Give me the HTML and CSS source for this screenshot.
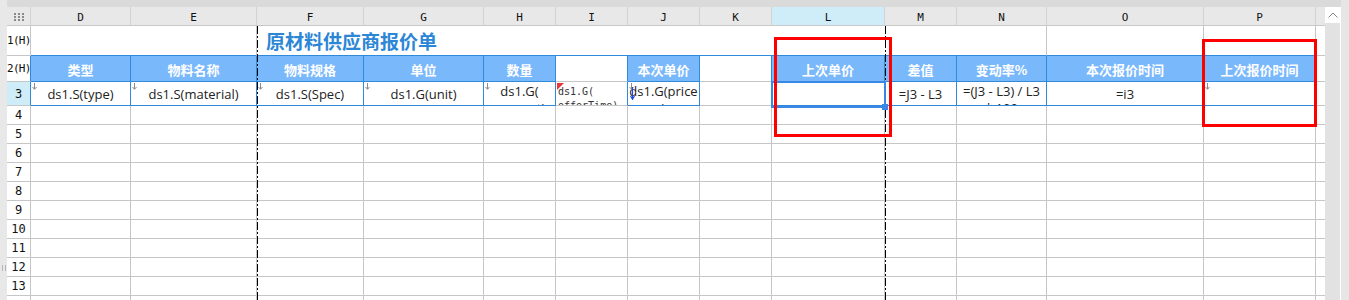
FILE: index.html
```html
<!DOCTYPE html>
<html lang="zh-CN">
<head>
    <meta charset="UTF-8">
    <meta name="viewport" content="width=device-width, initial-scale=1.0">
    <title>原材料供应商报价单 - 设计器</title>
    <link rel="stylesheet" href="styles.css">
</head>
<body>

    <div class="side"><span class="grip"></span></div>

    <div class="main">
        <div class="topbar"></div>
        <div class="work">
            <div class="sheet">
                <!-- 列头 -->
                <div class="corner">
                    <svg width="10" height="8" viewBox="0 0 10 8"><g fill="#8a8a8a"><rect x="0" y="0" width="2" height="2"/><rect x="4" y="0" width="2" height="2"/><rect x="8" y="0" width="2" height="2"/><rect x="0" y="3" width="2" height="2"/><rect x="4" y="3" width="2" height="2"/><rect x="8" y="3" width="2" height="2"/><rect x="0" y="6" width="2" height="2"/><rect x="4" y="6" width="2" height="2"/><rect x="8" y="6" width="2" height="2"/></g></svg>
                </div>
                <div class="ch">D</div><div class="ch">E</div><div class="ch">F</div><div class="ch">G</div><div class="ch">H</div><div class="ch">I</div><div class="ch">J</div><div class="ch">K</div><div class="ch sel">L</div><div class="ch">M</div><div class="ch">N</div><div class="ch">O</div><div class="ch">P</div><div class="ch f"></div>

                <!-- 第1行 标题 -->
                <div class="rh hh">1(H)</div>
                <div class="c top span2"></div>
                <div class="c top span9 title">原材料供应商报价单</div>
                <div class="c top"></div>
                <div class="c top"></div>
                <div class="c f"></div>

                <!-- 第2行 表头 -->
                <div class="rh hh blue">2(H)</div>
                <div class="c h">类型</div>
                <div class="c h">物料名称</div>
                <div class="c h">物料规格</div>
                <div class="c h">单位</div>
                <div class="c h">数量</div>
                <div class="c rb"></div>
                <div class="c h">本次单价</div>
                <div class="c rb"></div>
                <div class="c h">上次单价</div>
                <div class="c h">差值</div>
                <div class="c h">变动率%</div>
                <div class="c h">本次报价时间</div>
                <div class="c h">上次报价时间</div>
                <div class="c f"></div>

                <!-- 第3行 数据 -->
                <div class="rh blue cur">3</div>
                <div class="c b"><span class="mk"><svg width="5" height="7" viewBox="0 0 5 7"><path d="M2.5 0V6M0.5 4L2.5 6.3L4.5 4" fill="none" stroke="#8c8c8c"/></svg></span>ds1.S(type)</div>
                <div class="c b"><span class="mk"><svg width="5" height="7" viewBox="0 0 5 7"><path d="M2.5 0V6M0.5 4L2.5 6.3L4.5 4" fill="none" stroke="#8c8c8c"/></svg></span>ds1.S(material)</div>
                <div class="c b"><span class="mk"><svg width="5" height="7" viewBox="0 0 5 7"><path d="M2.5 0V6M0.5 4L2.5 6.3L4.5 4" fill="none" stroke="#8c8c8c"/></svg></span>ds1.S(Spec)</div>
                <div class="c b"><span class="mk"><svg width="5" height="7" viewBox="0 0 5 7"><path d="M2.5 0V6M0.5 4L2.5 6.3L4.5 4" fill="none" stroke="#8c8c8c"/></svg></span>ds1.G(unit)</div>
                <div class="c b wrap"><span class="mk"><svg width="5" height="7" viewBox="0 0 5 7"><path d="M2.5 0V6M0.5 4L2.5 6.3L4.5 4" fill="none" stroke="#8c8c8c"/></svg></span>ds1.G(<br>amount)</div>
                <div class="c rb mono"><span class="mk"><svg width="8" height="8" viewBox="0 0 8 8"><path d="M0 0H7L0 7Z" fill="#e8343c"/></svg></span>ds1.G(<br>offerTime)</div>
                <div class="c b wrap"><span class="mk"><svg width="5" height="7" viewBox="0 0 5 7"><path d="M2.5 0V6M0.5 4L2.5 6.3L4.5 4" fill="none" stroke="#8c8c8c"/></svg></span><span class="mk down"><svg width="5" height="13" viewBox="0 0 5 13"><path d="M2.5 0V12M0.5 9L2.5 12.3L4.5 9" fill="none" stroke="#1d48e0" stroke-width="1.2"/></svg></span>ds1.G(price<br>)</div>
                <div class="c rb"></div>
                <div class="c b"></div>
                <div class="c b">=J3 - L3</div>
                <div class="c b wrap">=(J3 - L3) / L3<br>* 100</div>
                <div class="c b">=i3</div>
                <div class="c b"><span class="mk"><svg width="5" height="7" viewBox="0 0 5 7"><path d="M2.5 0V6M0.5 4L2.5 6.3L4.5 4" fill="none" stroke="#8c8c8c"/></svg></span></div>
                <div class="c f"></div>

                <!-- 空行 -->
                <div class="rh">4</div><div class="c"></div><div class="c"></div><div class="c"></div><div class="c"></div><div class="c"></div><div class="c"></div><div class="c"></div><div class="c"></div><div class="c"></div><div class="c"></div><div class="c"></div><div class="c"></div><div class="c"></div><div class="c f"></div>
                <div class="rh">5</div><div class="c"></div><div class="c"></div><div class="c"></div><div class="c"></div><div class="c"></div><div class="c"></div><div class="c"></div><div class="c"></div><div class="c"></div><div class="c"></div><div class="c"></div><div class="c"></div><div class="c"></div><div class="c f"></div>
                <div class="rh">6</div><div class="c"></div><div class="c"></div><div class="c"></div><div class="c"></div><div class="c"></div><div class="c"></div><div class="c"></div><div class="c"></div><div class="c"></div><div class="c"></div><div class="c"></div><div class="c"></div><div class="c"></div><div class="c f"></div>
                <div class="rh">7</div><div class="c"></div><div class="c"></div><div class="c"></div><div class="c"></div><div class="c"></div><div class="c"></div><div class="c"></div><div class="c"></div><div class="c"></div><div class="c"></div><div class="c"></div><div class="c"></div><div class="c"></div><div class="c f"></div>
                <div class="rh">8</div><div class="c"></div><div class="c"></div><div class="c"></div><div class="c"></div><div class="c"></div><div class="c"></div><div class="c"></div><div class="c"></div><div class="c"></div><div class="c"></div><div class="c"></div><div class="c"></div><div class="c"></div><div class="c f"></div>
                <div class="rh">9</div><div class="c"></div><div class="c"></div><div class="c"></div><div class="c"></div><div class="c"></div><div class="c"></div><div class="c"></div><div class="c"></div><div class="c"></div><div class="c"></div><div class="c"></div><div class="c"></div><div class="c"></div><div class="c f"></div>
                <div class="rh">10</div><div class="c"></div><div class="c"></div><div class="c"></div><div class="c"></div><div class="c"></div><div class="c"></div><div class="c"></div><div class="c"></div><div class="c"></div><div class="c"></div><div class="c"></div><div class="c"></div><div class="c"></div><div class="c f"></div>
                <div class="rh">11</div><div class="c"></div><div class="c"></div><div class="c"></div><div class="c"></div><div class="c"></div><div class="c"></div><div class="c"></div><div class="c"></div><div class="c"></div><div class="c"></div><div class="c"></div><div class="c"></div><div class="c"></div><div class="c f"></div>
                <div class="rh">12</div><div class="c"></div><div class="c"></div><div class="c"></div><div class="c"></div><div class="c"></div><div class="c"></div><div class="c"></div><div class="c"></div><div class="c"></div><div class="c"></div><div class="c"></div><div class="c"></div><div class="c"></div><div class="c f"></div>
                <div class="rh">13</div><div class="c"></div><div class="c"></div><div class="c"></div><div class="c"></div><div class="c"></div><div class="c"></div><div class="c"></div><div class="c"></div><div class="c"></div><div class="c"></div><div class="c"></div><div class="c"></div><div class="c"></div><div class="c f"></div>
                <div class="rh">14</div><div class="c"></div><div class="c"></div><div class="c"></div><div class="c"></div><div class="c"></div><div class="c"></div><div class="c"></div><div class="c"></div><div class="c"></div><div class="c"></div><div class="c"></div><div class="c"></div><div class="c"></div><div class="c f"></div>

                <!-- 分页线、选中框、标注框 -->
                <div class="pagebreak pb1"></div>
                <div class="pagebreak pb2"></div>
                <div class="selection"><span class="handle"></span></div>
                <div class="mark mark1"></div>
                <div class="mark mark2"></div>
            </div>

            <div class="vscroll">
                <div class="up"><svg width="10" height="6" viewBox="0 0 10 6"><path d="M0.5 5.5L5 1L9.5 5.5" fill="none" stroke="#8a8a8a"/></svg></div>
            </div>
        </div>
    </div>

    <div class="edge"></div>

</body>
</html>
```

FILE: styles.css
```css
* {
    margin: 0;
    padding: 0;
    box-sizing: border-box;
}

body {
    display: flex;
    height: 300px;
    overflow: hidden;
    background: #e8e8e8;
    font-family: "Open Sans", "Noto Sans CJK SC", sans-serif;
}

.side {
    width: 7px;
    display: flex;
    flex-direction: column;
    align-items: center;
}

.grip {
    width: 4px;
    height: 6px;
    margin-top: 265px;
    border-left: 1px solid #b5b5b5;
    border-right: 1px solid #b5b5b5;
}

.main {
    width: 1334px;
    display: flex;
    flex-direction: column;
}

.topbar {
    height: 7px;
    background: #dadada;
}

.work {
    display: flex;
    flex: 1;
    min-height: 0;
}

.edge {
    width: 8px;
    background: #e6e6e6;
}

/* Hoja */
.sheet {
    position: relative;
    width: 1318px;
    background: #fff;
    overflow: hidden;
    display: grid;
    grid-template-columns: 24px 100px 126px 107px 120px 72px 72px 72px 72px 113px 72px 90px 157px 112px 9px;
    grid-template-rows: 19px 30px 26px 24px repeat(11, 19px);
}

.corner {
    background: #e8e8e8;
    border-right: 1px solid #d2d2d2;
    border-bottom: 1px solid #c8c8c8;
    display: flex;
    align-items: center;
    justify-content: center;
    padding-top: 1px;
}

.ch {
    background: #e8e8e8;
    border-right: 1px solid #d2d2d2;
    border-bottom: 1px solid #c8c8c8;
    display: flex;
    align-items: center;
    justify-content: center;
    padding-top: 3px;
    font-family: "DejaVu Sans Mono", monospace;
    font-size: 11px;
    color: #111;
}

.ch.sel { background: #cfedf9; }
.ch.f { border-right: none; }

.rh {
    background: #fff;
    border-right: 1px solid #c6c6c6;
    border-bottom: 1px solid #c6c6c6;
    display: flex;
    align-items: center;
    justify-content: center;
    font-family: "DejaVu Sans Mono", monospace;
    font-size: 12px;
    color: #111;
}

.rh.hh {
    font-size: 11px;
    letter-spacing: -0.7px;
    justify-content: flex-start;
}

.rh.blue { border-right-color: #2f8ad9; }
.rh.cur { background: #cfedf9; }

/* Celdas */
.c {
    position: relative;
    overflow: hidden;
    border-right: 1px solid #c6c6c6;
    border-bottom: 1px solid #c6c6c6;
    display: flex;
    align-items: center;
    justify-content: center;
    text-align: center;
    font-size: 13px;
    color: #222;
    white-space: nowrap;
}

.c.f { border-right: none; }
.c.top { border-bottom-color: #2f8ad9; }
.c.rb { border-right-color: #2f8ad9; }
.span2 { grid-column: span 2; }
.span9 { grid-column: span 9; }

.c.title {
    justify-content: flex-start;
    padding-left: 9px;
    font-family: "Noto Sans CJK SC", sans-serif;
    font-size: 19px;
    font-weight: 700;
    color: #2c86d6;
}

.c.h {
    background: #7ab8fc;
    border-color: #2f8ad9;
    color: #fff;
    font-family: "Noto Sans CJK SC", sans-serif;
    font-weight: 700;
    padding-top: 1px;
}

.c.b { border-color: #2f8ad9; }

.c.wrap {
    align-items: flex-start;
    line-height: 17px;
    padding-top: 1px;
}

.c.mono {
    align-items: flex-start;
    justify-content: flex-start;
    text-align: left;
    padding: 3px 0 0 2px;
    font-family: "DejaVu Sans Mono", monospace;
    font-size: 10px;
    line-height: 14px;
    color: #333;
}

.mk {
    position: absolute;
    left: 1px;
    top: 1px;
    display: flex;
}

.mk.down {
    left: 2px;
    top: 5px;
}

/* Overlays */
.pagebreak {
    position: absolute;
    top: 19px;
    bottom: 0;
    width: 1px;
    background: repeating-linear-gradient(to bottom, #000 0 8px, transparent 8px 10px, #000 10px 12px, transparent 12px 14px);
}

.pb1 { left: 250px; }
.pb2 { left: 878px; }

.selection {
    position: absolute;
    left: 764px;
    top: 74px;
    width: 115px;
    height: 27px;
    border: 2px solid #3b87e6;
}

.handle {
    position: absolute;
    right: -4px;
    bottom: -4px;
    width: 6px;
    height: 6px;
    background: #3b87e6;
}

.mark {
    position: absolute;
    border: 3px solid #ff0000;
}

.mark1 {
    left: 767px;
    top: 30px;
    width: 118px;
    height: 100px;
}

.mark2 {
    left: 1195px;
    top: 32px;
    width: 115px;
    height: 88px;
}

/* Scroll */
.vscroll {
    width: 16px;
    background: #e2e2e2;
    border-right: 1px solid #fff;
}

.up {
    height: 16px;
    background: #fff;
    display: flex;
    align-items: center;
    justify-content: center;
}
```
